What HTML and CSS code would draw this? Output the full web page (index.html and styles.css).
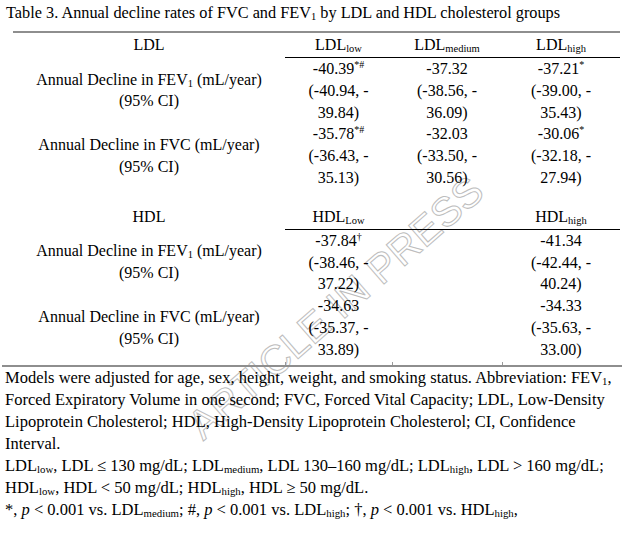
FILE: index.html
```html
<!DOCTYPE html>
<html>
<head>
<meta charset="utf-8">
<link rel="stylesheet" href="styles.css">
</head>
<body>
<div class="page">
  <div class="watermark">ARTICLE IN PRESS</div>
  <p class="caption">Table 3. Annual decline rates of FVC and FEV<sub>1</sub> by LDL and HDL cholesterol groups</p>
  <table class="t">
    <colgroup>
      <col class="c1"><col class="c2"><col class="c3"><col class="c4">
    </colgroup>
    <tr class="head">
      <th class="lab">LDL</th>
      <th class="v">LDL<sub>low</sub></th>
      <th class="v">LDL<sub>medium</sub></th>
      <th class="v">LDL<sub>high</sub></th>
    </tr>
    <tr>
      <td class="lab">Annual Decline in FEV<sub>1</sub> (mL/year)<br>(95% CI)</td>
      <td>-40.39<sup>*#</sup><br>(-40.94, -<br>39.84)</td>
      <td>-37.32<br>(-38.56, -<br>36.09)</td>
      <td>-37.21<sup>*</sup><br>(-39.00, -<br>35.43)</td>
    </tr>
    <tr>
      <td class="lab">Annual Decline in FVC (mL/year)<br>(95% CI)</td>
      <td>-35.78<sup>*#</sup><br>(-36.43, -<br>35.13)</td>
      <td>-32.03<br>(-33.50, -<br>30.56)</td>
      <td>-30.06<sup>*</sup><br>(-32.18, -<br>27.94)</td>
    </tr>
    <tr class="gap"><td colspan="4"></td></tr>
    <tr class="head">
      <th class="lab">HDL</th>
      <th class="v">HDL<sub>Low</sub></th>
      <th class="v"></th>
      <th class="v">HDL<sub>high</sub></th>
    </tr>
    <tr>
      <td class="lab">Annual Decline in FEV<sub>1</sub> (mL/year)<br>(95% CI)</td>
      <td>-37.84<sup>†</sup><br>(-38.46, -<br>37.22)</td>
      <td></td>
      <td>-41.34<br>(-42.44, -<br>40.24)</td>
    </tr>
    <tr class="last">
      <td class="lab">Annual Decline in FVC (mL/year)<br>(95% CI)</td>
      <td class="tick">-34.63<br>(-35.37, -<br>33.89)</td>
      <td class="tick"></td>
      <td class="tick">-34.33<br>(-35.63, -<br>33.00)</td>
    </tr>
  </table>
  <div class="notes">
    <p>Models were adjusted for age, sex, height, weight, and smoking status. Abbreviation: FEV<sub>1</sub>,<br>Forced Expiratory Volume in one second; FVC, Forced Vital Capacity; LDL, Low-Density<br>Lipoprotein Cholesterol; HDL, High-Density Lipoprotein Cholesterol; CI, Confidence<br>Interval.</p>
    <p>LDL<sub>low</sub>, LDL ≤ 130 mg/dL; LDL<sub>medium</sub>, LDL 130–160 mg/dL; LDL<sub>high</sub>, LDL &gt; 160 mg/dL;<br>HDL<sub>low</sub>, HDL &lt; 50 mg/dL; HDL<sub>high</sub>, HDL ≥ 50 mg/dL.</p>
    <p>*, <i>p</i> &lt; 0.001 vs. LDL<sub>medium</sub>; #, <i>p</i> &lt; 0.001 vs. LDL<sub>high</sub>; †, <i>p</i> &lt; 0.001 vs. HDL<sub>high</sub>,</p>
  </div>
</div>
</body>
</html>
```

FILE: styles.css
```css
html {
  background: #ffffff;
}
body {
  margin: 0;
  padding: 0;
  font-family: "Liberation Serif", "Times New Roman", serif;
  font-size: 16px;
  color: #000;
}
.page {
  position: relative;
  width: 627px;
  height: 537px;
  overflow: hidden;
  padding: 2px 0 0 6px;
  box-sizing: border-box;
}
sub {
  font-size: 10.5px;
  vertical-align: -2px;
  line-height: 0;
}
sup {
  font-size: 10px;
  vertical-align: 6px;
  line-height: 0;
}
.caption {
  margin: 0;
  font-size: 16.3px;
  line-height: 22px;
}
.t {
  border-collapse: collapse;
  table-layout: fixed;
  margin: 7px 0 0 7px;
  width: 607px;
  border-top: 2px solid #8e8e8e;
}
.c1 { width: 272px; }
.c2 { width: 107px; }
.c3 { width: 110px; }
.c4 { width: 118px; }
.t th, .t td {
  padding: 0;
  text-align: center;
  vertical-align: middle;
  font-weight: normal;
  line-height: 21.8px;
}
.head th {
  height: 24px;
}
.head th.v {
  border-bottom: 1px solid #000;
}
.gap td {
  height: 16px;
}
.last td {
  padding-bottom: 4px;
}
.last td.tick {
  background: linear-gradient(#9a9a9a, #9a9a9a) left bottom / 1px 3px no-repeat;
}
.notes {
  margin-left: -4px;
  width: 620px;
  border-top: 2px solid #8e8e8e;
  padding: 0 0 0 3px;
  box-sizing: border-box;
  white-space: nowrap;
  font-size: 16.5px;
}
.notes sub {
  font-size: 10.8px;
}
.notes p {
  margin: 0;
  line-height: 22px;
}
.watermark {
  position: absolute;
  left: 336px;
  top: 308px;
  z-index: -1;
  transform: translate(-50%, -50%) rotate(-41deg);
  font-family: "Liberation Sans", Arial, sans-serif;
  font-size: 41px;
  white-space: nowrap;
  color: transparent;
  -webkit-text-stroke: 1px #bdbdbd;
}
```
